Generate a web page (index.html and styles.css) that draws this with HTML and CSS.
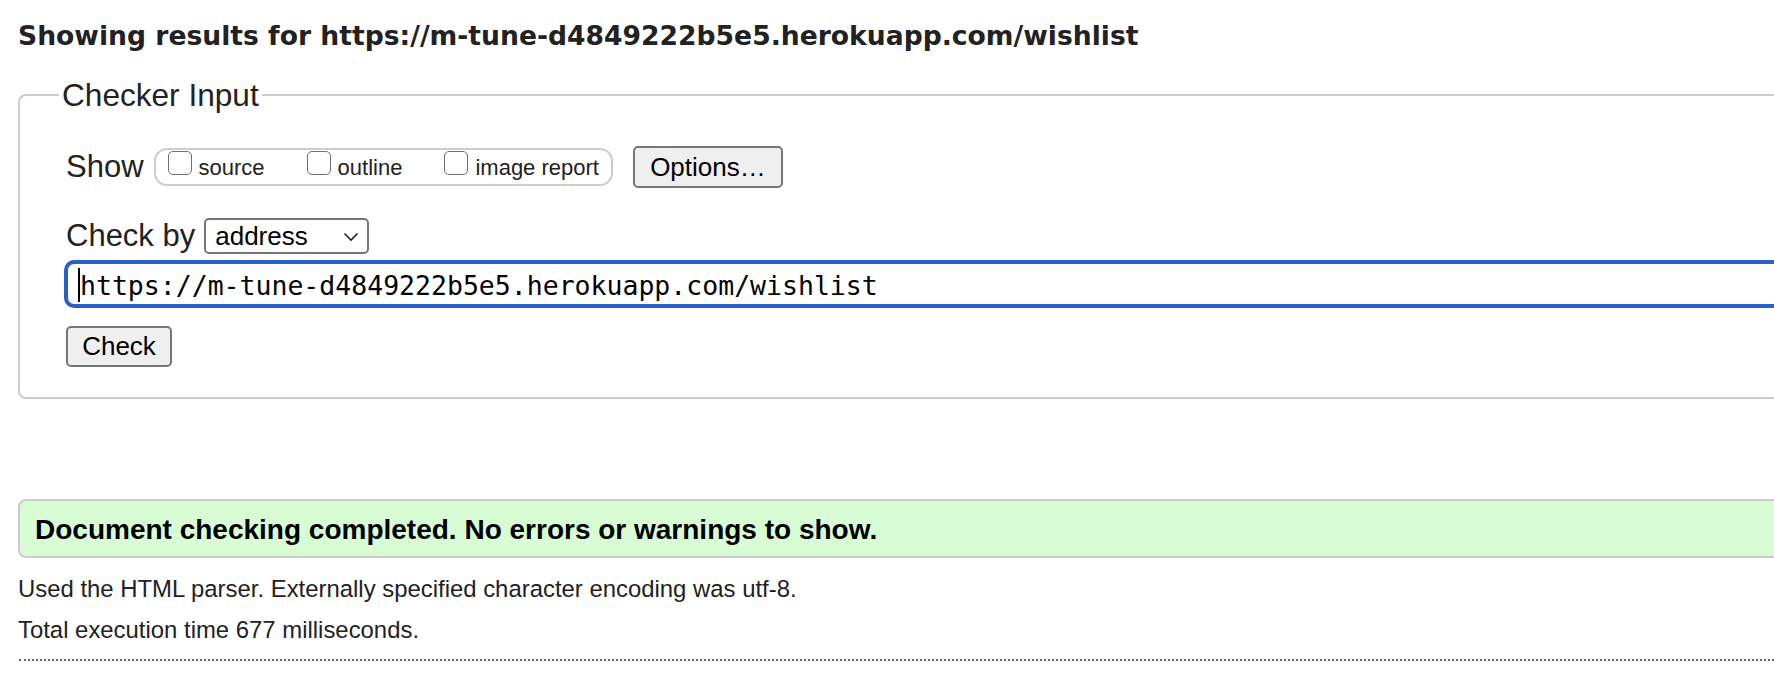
FILE: index.html
```html
<!DOCTYPE html>
<html lang="en">
<head>
<meta charset="utf-8">
<title>Showing results for https://m-tune-d4849222b5e5.herokuapp.com/wishlist</title>
<link rel="stylesheet" href="styles.css">
</head>
<body>
<div class="page">
  <h2 class="title">Showing results for https://m-tune-d4849222b5e5.herokuapp.com/wishlist</h2>

  <fieldset class="checker">
    <legend class="checker-legend">Checker Input</legend>

    <div class="row row-show">
      <span class="row-label">Show</span>
      <div class="show-group">
        <label class="opt"><input type="checkbox" class="cb"><span class="opt-text">source</span></label>
        <label class="opt"><input type="checkbox" class="cb"><span class="opt-text">outline</span></label>
        <label class="opt"><input type="checkbox" class="cb"><span class="opt-text">image report</span></label>
      </div>
      <button class="btn btn-options" type="button">Options…</button>
    </div>

    <div class="row row-by">
      <span class="row-label">Check by</span>
      <div class="select">
        <span class="select-text">address</span>
        <svg class="chevron" width="16" height="10" viewBox="0 0 16 10"><polyline points="1.5,1.5 8,8 14.5,1.5" fill="none" stroke="#222" stroke-width="1.6"/></svg>
      </div>
    </div>

    <div class="url-input"><span class="caret"></span><span class="url-text">https://m-tune-d4849222b5e5.herokuapp.com/wishlist</span></div>

    <button class="btn btn-check" type="button">Check</button>
  </fieldset>

  <div class="success">Document checking completed. No errors or warnings to show.</div>

  <p class="info">Used the HTML parser. Externally specified character encoding was utf-8.</p>
  <p class="info">Total execution time 677 milliseconds.</p>

  <hr class="dots">
</div>
</body>
</html>
```

FILE: styles.css
```css
html, body {
  margin: 0;
  padding: 0;
  overflow: hidden;
  background: #ffffff;
}

body {
  font-family: "Liberation Sans", Arial, sans-serif;
  color: #222222;
}

.page {
  width: 2000px;
  padding-left: 18px;
}

.title {
  margin: 18px 0 0 0;
  font-family: "DejaVu Sans", "Liberation Sans", sans-serif;
  font-weight: bold;
  font-size: 26.6px;
  line-height: 36px;
  color: #222222;
  white-space: nowrap;
}

.checker {
  margin: 21px 0 0 0;
  padding: 32px 0 30px 46px;
  border: 2px solid #cccccc;
  border-radius: 8px;
  min-width: 0;
}

.checker-legend {
  font-size: 31.6px;
  padding: 2px 3px 0 3px;
  margin-left: -7px;
  color: #222222;
}

.row {
  display: flex;
  align-items: center;
}

.row-show {
  height: 42px;
}

.row-by {
  margin-top: 30px;
  height: 36px;
}

.row-label {
  font-size: 31px;
  line-height: 36px;
  white-space: nowrap;
}

.show-group {
  box-sizing: border-box;
  height: 38px;
  margin-left: 10px;
  padding: 0 12px 3px 12px;
  border: 2px solid #cccccc;
  border-radius: 13px;
  display: flex;
  align-items: center;
  gap: 42px;
}

.opt {
  display: flex;
  align-items: flex-end;
  gap: 7px;
}

.cb {
  -webkit-appearance: none;
  appearance: none;
  box-sizing: border-box;
  width: 24px;
  height: 24px;
  margin: 0 0 5px 0;
  border: 1.5px solid #6f6f6f;
  border-radius: 5px;
  background: #ffffff;
}

.opt-text {
  font-size: 22px;
  line-height: 25px;
  white-space: nowrap;
}

.btn {
  box-sizing: border-box;
  font-family: "Liberation Sans", Arial, sans-serif;
  font-size: 26px;
  color: #000000;
  background: #efefef;
  border: 2px solid #767676;
  border-radius: 5px;
  padding: 0;
}

.btn-options {
  margin-left: 20px;
  width: 150px;
  height: 42px;
}

.select {
  box-sizing: border-box;
  width: 165px;
  height: 36px;
  margin-left: 9px;
  padding: 0 8px 0 9px;
  border: 2px solid #767676;
  border-radius: 5px;
  display: flex;
  align-items: center;
  justify-content: space-between;
  background: #ffffff;
}

.select-text {
  font-size: 26px;
  color: #000000;
}

.chevron {
  display: block;
  margin-top: 2px;
}

.url-input {
  box-sizing: border-box;
  margin-top: 8px;
  height: 44px;
  width: 1800px;
  border: 2px solid #2b5fc6;
  box-shadow: 0 0 0 2px #2b5fc6;
  border-radius: 8px;
  padding: 2px 0 0 10px;
  display: flex;
  align-items: center;
  background: #ffffff;
}

.caret {
  width: 2px;
  height: 34px;
  background: #000000;
  flex: none;
}

.url-text {
  font-family: "DejaVu Sans Mono", "Liberation Mono", monospace;
  font-size: 26.5px;
  color: #000000;
  white-space: nowrap;
}

.btn-check {
  display: block;
  margin-top: 20px;
  width: 106px;
  height: 41px;
}

.success {
  margin-top: 100px;
  box-sizing: border-box;
  height: 59px;
  padding: 13px 15px 10px 15px;
  border: 2px solid #cccccc;
  border-radius: 8px;
  background: #d8fdd4;
  font-weight: bold;
  font-size: 28px;
  color: #000000;
  white-space: nowrap;
}

.info {
  margin: 0;
  font-size: 23.9px;
  line-height: 41px;
  color: #222222;
  white-space: nowrap;
}

.info:first-of-type {
  margin-top: 10px;
}

.dots {
  margin: 9px 0 0 1px;
  border: 0;
  border-top: 2px dotted #666666;
  height: 0;
}
```
